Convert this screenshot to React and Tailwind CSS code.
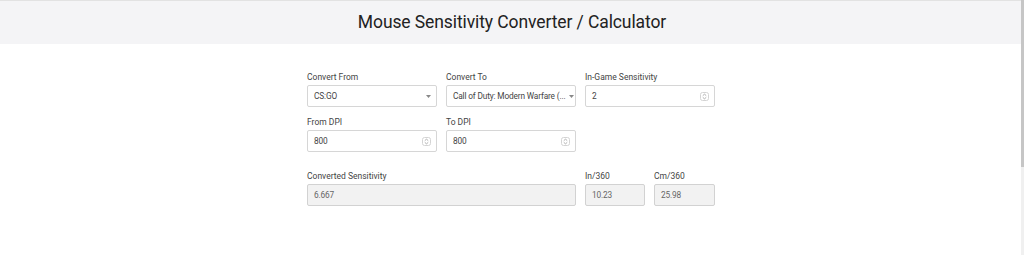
import React from 'react';

const font = { fontFamily: 'Roboto, "Liberation Sans", sans-serif' };

const Spinner = () => (
  <svg width="9" height="9" viewBox="0 0 9 9" className="shrink-0">
    <rect x="0.5" y="0.5" width="8" height="8" rx="2" fill="#fff" stroke="#d4d4d4" />
    <path d="M2.8 3.6 L4.5 2.2 L6.2 3.6" fill="none" stroke="#9a9a9a" strokeWidth="0.8" />
    <path d="M2.8 5.4 L4.5 6.8 L6.2 5.4" fill="none" stroke="#9a9a9a" strokeWidth="0.8" />
  </svg>
);

const Caret = () => (
  <svg width="5" height="3" viewBox="0 0 5 3" className="shrink-0">
    <path d="M0 0 L5 0 L2.5 3 Z" fill="#888" />
  </svg>
);

const Field = ({ label, value, kind, disabled, className = '' }) => (
  <div className={`flex flex-col ${className}`}>
    <label className="text-[8.5px] leading-none text-[#444] mb-[5px] h-[6px] flex items-center">{label}</label>
    <div
      className={`h-[22px] flex items-center gap-[3px] pl-[6px] pr-[5px] border rounded-[2px] text-[8.3px] ${
        disabled ? 'bg-[#f2f2f2] border-[#d2d2d2] text-[#666]' : 'bg-white border-[#d6d6d6] text-[#444]'
      }`}
    >
      <span className="whitespace-nowrap tracking-[-0.15px]">{value}</span>
      <span className="ml-auto flex items-center">
        {kind === 'select' && <Caret />}
        {kind === 'number' && <Spinner />}
      </span>
    </div>
  </div>
);

export default function App() {
  return (
    <div className="relative w-[1024px] h-[255px] bg-white overflow-hidden" style={font}>
      <header className="h-[44px] bg-[#f4f4f6] border-t border-[#e2e2e2] flex items-center justify-center">
        <h1 className="text-[17.5px] text-[#222] tracking-[-0.1px]">Mouse Sensitivity Converter / Calculator</h1>
      </header>

      <div className="w-[408px] ml-[307px] pt-[30px]">
        <div className="grid grid-cols-[130px_130px_130px] gap-x-[9px] gap-y-[12px]">
          <Field label="Convert From" value="CS:GO" kind="select" />
          <Field label="Convert To" value="Call of Duty: Modern Warfare (..." kind="select" />
          <Field label="In-Game Sensitivity" value="2" kind="number" />
          <Field label="From DPI" value="800" kind="number" />
          <Field label="To DPI" value="800" kind="number" />
        </div>

        <div className="flex gap-x-[9px] mt-[21px]">
          <Field label="Converted Sensitivity" value="6.667" disabled className="w-[269px]" />
          <Field label="In/360" value="10.23" disabled className="w-[60px]" />
          <Field label="Cm/360" value="25.98" disabled className="w-[61px]" />
        </div>
      </div>

      <div className="absolute top-0 right-0 w-[3px] h-full bg-[#f0f0f0]">
        <div className="w-full h-[167px] bg-[#c6c6c6]" />
      </div>
    </div>
  );
}
